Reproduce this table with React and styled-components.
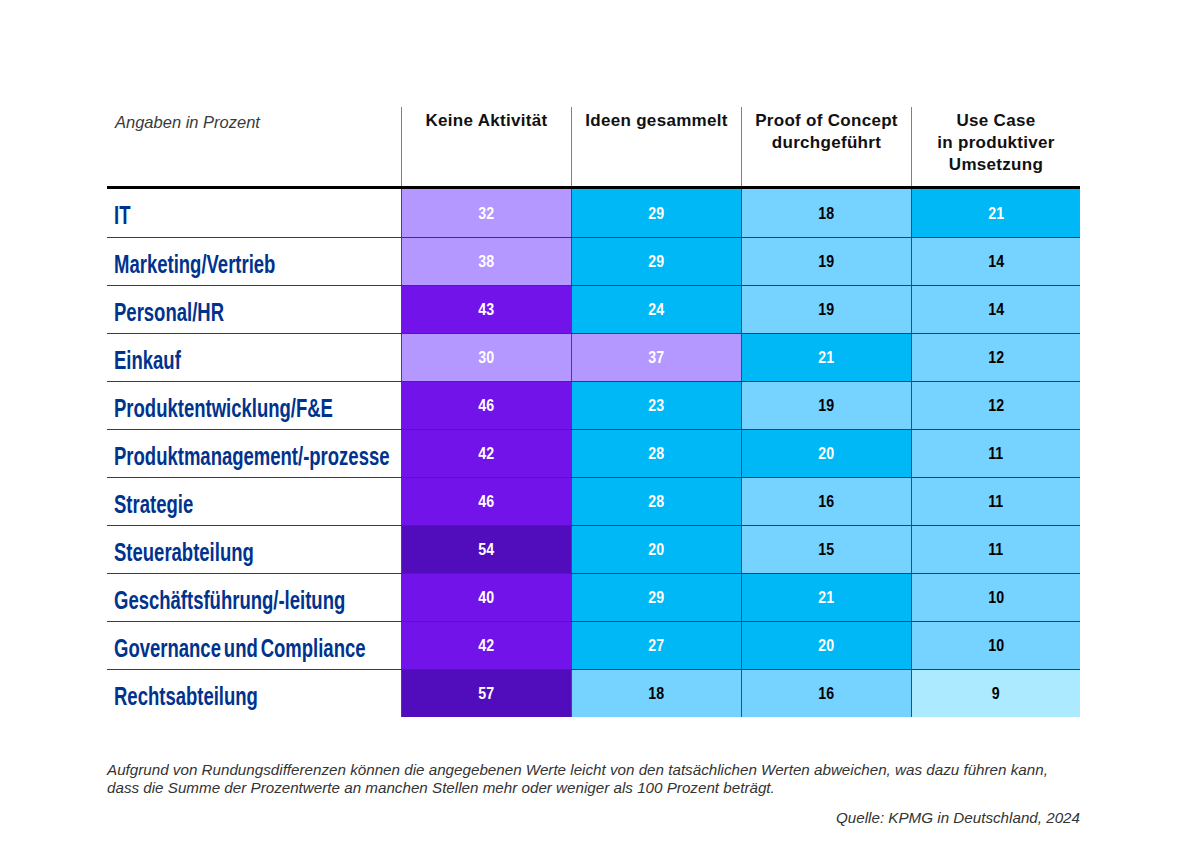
import styled, { createGlobalStyle } from "styled-components";

const GlobalStyle = createGlobalStyle`
  html, body {
    margin: 0;
    padding: 0;
    background: #fff;
  }
  body {
    font-family: "Liberation Sans", Arial, sans-serif;
  }
`;

// fill colours of the heat map
const tones = {
  lp: { bg: "#b497ff", fg: "#fff" },
  p: { bg: "#7213ea", fg: "#fff" },
  dp: { bg: "#510dbc", fg: "#fff" },
  b: { bg: "#00b8f5", fg: "#fff" },
  lb: { bg: "#76d2ff", fg: "#000" },
  pb: { bg: "#aceaff", fg: "#000" },
};

const columns = [
  ["Keine Aktivität"],
  ["Ideen gesammelt"],
  ["Proof of Concept", "durchgeführt"],
  ["Use Case", "in produktiver", "Umsetzung"],
];

const rows = [
  { label: "IT", cells: [[32, "lp"], [29, "b"], [18, "lb"], [21, "b"]] },
  { label: "Marketing/Vertrieb", cells: [[38, "lp"], [29, "b"], [19, "lb"], [14, "lb"]] },
  { label: "Personal/HR", cells: [[43, "p"], [24, "b"], [19, "lb"], [14, "lb"]] },
  { label: "Einkauf", cells: [[30, "lp"], [37, "lp"], [21, "b"], [12, "lb"]] },
  { label: "Produktentwicklung/F&E", cells: [[46, "p"], [23, "b"], [19, "lb"], [12, "lb"]] },
  { label: "Produktmanagement/-prozesse", cells: [[42, "p"], [28, "b"], [20, "b"], [11, "lb"]] },
  { label: "Strategie", cells: [[46, "p"], [28, "b"], [16, "lb"], [11, "lb"]] },
  { label: "Steuerabteilung", cells: [[54, "dp"], [20, "b"], [15, "lb"], [11, "lb"]] },
  { label: "Geschäftsführung/-leitung", cells: [[40, "p"], [29, "b"], [21, "b"], [10, "lb"]] },
  { label: "Governance und Compliance", tight: true, cells: [[42, "p"], [27, "b"], [20, "b"], [10, "lb"]] },
  { label: "Rechtsabteilung", cells: [[57, "dp"], [18, "lb"], [16, "lb"], [9, "pb"]] },
];

export default function App() {
  return (
    <>
      <GlobalStyle />
      <Page>
        <Table>
          <HeaderRow>
            <Caption>Angaben in Prozent</Caption>
            {columns.map((lines, i) => (
              <ColumnHead key={i}>
                {lines.map((l) => (
                  <div key={l}>{l}</div>
                ))}
              </ColumnHead>
            ))}
          </HeaderRow>
          {rows.map((row) => (
            <Row key={row.label}>
              <Label>
                <LabelText $tight={row.tight}>{row.label}</LabelText>
              </Label>
              {row.cells.map(([value, tone], i) => (
                <Cell key={i} $tone={tone}>
                  <Num>{value}</Num>
                </Cell>
              ))}
            </Row>
          ))}
        </Table>
        <Notes>
          <Note>
            Aufgrund von Rundungsdifferenzen können die angegebenen Werte leicht von den tatsächlichen Werten abweichen, was dazu führen kann,
            <br />
            dass die Summe der Prozentwerte an manchen Stellen mehr oder weniger als 100 Prozent beträgt.
          </Note>
          <Source>Quelle: KPMG in Deutschland, 2024</Source>
        </Notes>
      </Page>
    </>
  );
}

const Page = styled.div`
  width: 973px;
  margin-left: 107px;
  padding-top: 107px;
`;

const Table = styled.div`
  display: flex;
  flex-direction: column;
`;

const grid = `
  display: grid;
  grid-template-columns: 294px 170px 170px 170px 169px;
`;

const HeaderRow = styled.div`
  ${grid}
  height: 79px;
  border-bottom: 3px solid #000;
`;

const Caption = styled.div`
  padding: 4px 0 0 8px;
  font-size: 16.5px;
  font-style: italic;
  line-height: 22px;
  color: #3a3a3a;
`;

const ColumnHead = styled.div`
  border-left: 1px solid #808080;
  padding-top: 3px;
  text-align: center;
  font-size: 17px;
  font-weight: 700;
  letter-spacing: 0.3px;
  line-height: 22px;
  color: #111;
`;

const Row = styled.div`
  ${grid}
  height: 48px;
  & + & {
    height: 47px;
    border-top: 1px solid #3c3c3c;
  }
`;

const Label = styled.div`
  display: flex;
  align-items: center;
  padding: 5px 0 0 7px;
  white-space: nowrap;
`;

const LabelText = styled.span`
  display: inline-block;
  font-size: 25px;
  font-weight: 700;
  color: #00338d;
  word-spacing: ${(p) => (p.$tight ? "-3px" : "0")};
  transform: scaleX(0.74);
  transform-origin: left center;
`;

const Cell = styled.div`
  display: flex;
  align-items: center;
  justify-content: center;
  border-left: 1px solid #4a4a4a;
  background: ${(p) => tones[p.$tone].bg};
  color: ${(p) => tones[p.$tone].fg};
`;

const Num = styled.span`
  display: inline-block;
  font-size: 16.5px;
  font-weight: 700;
  transform: scaleX(0.86);
`;

const Notes = styled.div`
  padding-top: 44px;
  color: #333;
`;

const Note = styled.p`
  margin: 0;
  font-size: 15.2px;
  font-style: italic;
  line-height: 18px;
`;

const Source = styled.p`
  margin: 12px 0 0;
  text-align: right;
  font-size: 15.2px;
  font-style: italic;
  line-height: 18px;
`;
